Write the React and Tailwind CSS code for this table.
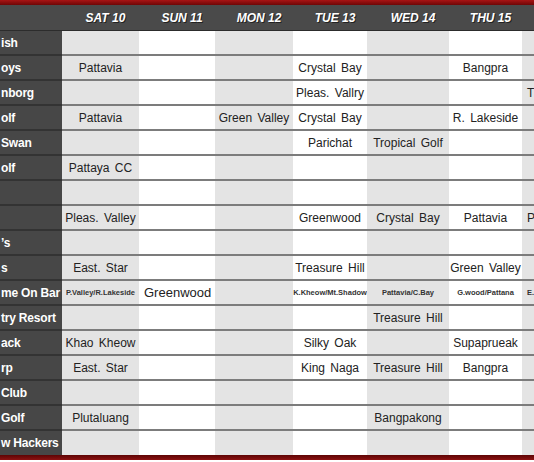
const cols = [
  'w-[77px] bg-[#e4e4e4]',
  'w-[76px] bg-white',
  'w-[78px] bg-[#e4e4e4]',
  'w-[74px] bg-white',
  'w-[82px] bg-[#e4e4e4]',
  'w-[73px] bg-white',
  'flex-1 bg-[#e4e4e4]',
]

const headCols = ['w-[77px]', 'w-[76px]', 'w-[78px]', 'w-[74px]', 'w-[82px]', 'w-[73px]', 'flex-1']

// FRI column only shows its first pixels, its heading falls outside the frame
const days = ['SAT 10', 'SUN 11', 'MON 12', 'TUE 13', 'WED 14', 'THU 15', '']

const rows = [
  { label: 'ish', cells: [] },
  { label: 'oys', cells: ['Pattavia', '', '', 'Crystal Bay', '', 'Bangpra'] },
  { label: 'nborg', cells: ['', '', '', 'Pleas. Vallry', '', '', { t: 'Tr', edge: true }] },
  { label: 'olf', cells: ['Pattavia', '', 'Green Valley', 'Crystal Bay', '', 'R. Lakeside'] },
  { label: 'Swan', cells: ['', '', '', 'Parichat', 'Tropical Golf'] },
  { label: 'olf', cells: ['Pattaya CC'] },
  { label: '', cells: [] },
  { label: '', cells: ['Pleas. Valley', '', '', 'Greenwood', 'Crystal Bay', 'Pattavia', { t: 'P', edge: true }] },
  { label: '\u2019s', cells: [] },
  { label: 's', cells: ['East. Star', '', '', 'Treasure Hill', '', 'Green Valley'] },
  {
    label: 'me On Bar',
    cells: [
      { t: 'P.Valley/R.Lakeside', small: true },
      { t: 'Greenwood', big: true },
      '',
      { t: 'K.Kheow/Mt.Shadow', small: true },
      { t: 'Pattavia/C.Bay', small: true },
      { t: 'G.wood/Pattana', small: true },
      { t: 'E.', small: true, edge: true },
    ],
  },
  { label: 'try Resort', cells: ['', '', '', '', 'Treasure Hill'] },
  { label: 'ack', cells: ['Khao Kheow', '', '', 'Silky Oak', '', 'Supaprueak'] },
  { label: 'rp', cells: ['East. Star', '', '', 'King Naga', 'Treasure Hill', 'Bangpra'] },
  { label: 'Club', cells: [] },
  { label: 'Golf', cells: ['Plutaluang', '', '', '', 'Bangpakong'] },
  { label: 'w Hackers', cells: [] },
]

function Cell({ value, cls, last }) {
  const border = last ? 'h-[24px]' : 'h-[25px] border-b-2 border-[#7c7c7c]'
  let inner = null
  if (value && typeof value === 'object') {
    if (value.small) {
      inner = (
        <span className={`text-[7.5px] font-bold text-[#333] ${value.edge ? 'pl-[5px]' : ''}`}>
          {value.t}
        </span>
      )
    } else if (value.big) {
      inner = <span className="pl-[5px] text-[13px] text-[#222]">{value.t}</span>
    } else {
      inner = <span className="pl-[5px] text-[12px] text-[#222]">{value.t}</span>
    }
  } else if (value) {
    inner = <span className="text-[12px] text-[#222] [word-spacing:2px]">{value}</span>
  }
  const align = value && typeof value === 'object' && (value.big || value.edge) ? 'justify-start' : 'justify-center'
  return (
    <div className={`${cls} ${border} flex items-center ${align} overflow-hidden whitespace-nowrap`}>
      {inner}
    </div>
  )
}

export default function App() {
  return (
    <div className="w-[534px] h-[462px] bg-white overflow-hidden font-['Liberation_Sans',Arial,sans-serif]">
      <div className="h-[5px] bg-gradient-to-b from-[#a81414] to-[#6f0606]" />
      <div className="flex h-[26px] bg-[#4a4a4a] border-b border-[#2c2c2c]">
        <div className="w-[62px]" />
        {days.map((d, i) => (
          <div
            key={i}
            className={`${headCols[i]} flex items-center justify-center pl-[10px] whitespace-nowrap text-[12px] font-bold italic text-white [text-shadow:1px_1px_0_#222]`}
          >
            {d}
          </div>
        ))}
      </div>
      {rows.map((r, ri) => {
        const last = ri === rows.length - 1
        return (
          <div key={ri} className="flex">
            <div
              className={`w-[62px] bg-[#474747] flex items-center pl-[1px] whitespace-nowrap overflow-hidden text-[12px] font-bold tracking-[-0.2px] text-white ${
                last ? 'h-[24px]' : 'h-[25px] border-b-2 border-[#333]'
              }`}
            >
              {r.label}
            </div>
            {cols.map((c, ci) => (
              <Cell key={ci} value={r.cells[ci]} cls={c} last={last} />
            ))}
          </div>
        )
      })}
      <div className="h-[5px] bg-gradient-to-b from-[#5e0505] to-[#8c1212]" />
    </div>
  )
}
